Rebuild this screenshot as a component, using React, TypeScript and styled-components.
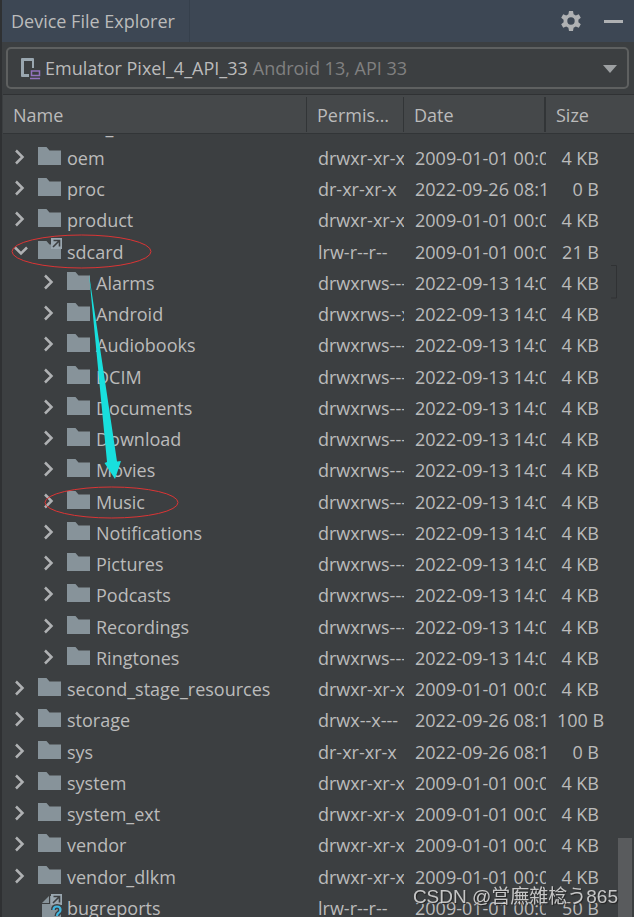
import React, { useLayoutEffect, useRef } from "react";
import styled, { createGlobalStyle } from "styled-components";

const GlobalStyle = createGlobalStyle`
  *, *::before, *::after { box-sizing: border-box; }
  body {
    margin: 0;
    background: #3c3f41;
    color: #bbbbbb;
    font: 18px/24px "Open Sans", "Noto Sans CJK SC", sans-serif;
  }
`;

const Panel = styled.main`
  position: relative;
  display: flex;
  flex-direction: column;
  height: 100vh;
  overflow: hidden;
  border-left: 2px solid #2f3133;
`;

const TitleBar = styled.header`
  display: flex;
  align-items: stretch;
  flex: none;
  height: 42px;
  padding-right: 11px;
  background: #3d4754;
`;

const Title = styled.h1`
  display: flex;
  align-items: center;
  width: 188px;
  margin: 0;
  padding-left: 9px;
  border-right: 1px solid #36404c;
  font-size: 18px;
  font-weight: 400;
  white-space: nowrap;
`;

const Tools = styled.div`
  display: flex;
  align-items: center;
  gap: 21px;
  margin-left: auto;
`;

const ToolButton = styled.button`
  display: flex;
  padding: 0;
  border: 0;
  background: none;
`;

const DeviceBar = styled.div`
  flex: none;
  padding: 5px 5px 5px 4px;
`;

const DeviceButton = styled.button`
  display: flex;
  align-items: center;
  width: 100%;
  height: 42px;
  padding: 0 10px 0 13px;
  border: 2px solid #5e6060;
  border-radius: 5px;
  background: #3c3f41;
  color: #bbbbbb;
  font: inherit;
  white-space: nowrap;
`;

const DeviceName = styled.span`
  margin: 0 5px 0 2px;
`;

const DeviceApi = styled.span`
  margin-right: auto;
  color: #808080;
`;

const Viewport = styled.div`
  flex: 1;
  min-height: 0;
  margin-left: 1px;
  overflow: hidden;
  border-top: 1px solid #303234;
`;

const Table = styled.table`
  width: 100%;
  border-collapse: separate;
  border-spacing: 0;
  table-layout: fixed;
`;

const Col = styled.col<{ $width?: number }>`
  width: ${({ $width }) => ($width ? `${$width}px` : "auto")};
`;

const HeadCell = styled.th<{ $divider?: number }>`
  position: sticky;
  top: 0;
  z-index: 1;
  height: 39px;
  padding: 2px 8px 0 10px;
  overflow: hidden;
  border-bottom: 1px solid #323537;
  background:
    linear-gradient(#323537, #323537) right 2px / ${({ $divider = 0 }) => $divider}px 35px no-repeat,
    #45484a;
  font-weight: 400;
  text-align: left;
  text-overflow: ellipsis;
  white-space: nowrap;
`;

const Row = styled.tr`
  height: 31px;
  &:nth-child(4n) { height: 32px; }
`;

const Cell = styled.td<{ $end?: boolean }>`
  padding: 0 ${({ $end }) => ($end ? 13 : 0)}px 0 11px;
  overflow: ${({ $end }) => ($end ? "visible" : "hidden")};
  line-height: 24px;
  text-align: ${({ $end }) => ($end ? "right" : "left")};
  white-space: nowrap;
`;

const Entry = styled.div<{ $depth: number }>`
  display: flex;
  align-items: center;
  padding-left: ${({ $depth }) => $depth * 29}px;
`;

const Toggle = styled.button`
  display: flex;
  width: 24px;
  height: 24px;
  padding: 1px 0 0;
  border: 0;
  background: none;
`;

const Icon = styled.svg`
  display: block;
  flex: none;
  margin: 0 5px 2px 0;
`;

const ScrollThumb = styled.div`
  position: absolute;
  right: 2px;
  bottom: 0;
  width: 14px;
  height: 79px;
  background: #595b5d;
`;

const Markup = styled.svg`
  position: absolute;
  top: 0;
  left: 0;
  z-index: 2;
  pointer-events: none;
`;

const Watermark = styled.div`
  position: absolute;
  right: 16px;
  bottom: 8px;
  z-index: 3;
  color: rgba(225, 225, 225, 0.85);
  font: 19px/24px "Liberation Sans", "Noto Sans CJK TC", "Noto Sans CJK JP", sans-serif;
  text-shadow: 1px 1px 1px #222;
  white-space: nowrap;
`;

type Kind = "folder" | "link" | "filelink";
type File = { name: string; perm: string; date: string; size: string; depth: number; kind: Kind };

const OLD = "2009-01-01 00:00";
const BOOT = "2022-09-26 08:11";
const MADE = "2022-09-13 14:00";

const file = (
  name: string, perm = "drwxr-xr-x", date = OLD, size = "4 KB", depth = 0, kind: Kind = "folder",
): File => ({ name, perm, date, size, depth, kind });
const child = (name: string, perm = "drwxrws---") => file(name, perm, MADE, "4 KB", 1);

const files: File[] = [
  file("odm_dlkm"),
  file("oem"),
  file("proc", "dr-xr-xr-x", BOOT, "0 B"),
  file("product"),
  file("sdcard", "lrw-r--r--", OLD, "21 B", 0, "link"),
  child("Alarms"),
  child("Android", "drwxrws--x"),
  child("Audiobooks"),
  child("DCIM"),
  child("Documents"),
  child("Download"),
  child("Movies"),
  child("Music"),
  child("Notifications"),
  child("Pictures"),
  child("Podcasts"),
  child("Recordings"),
  child("Ringtones"),
  file("second_stage_resources"),
  file("storage", "drwx--x---", BOOT, "100 B"),
  file("sys", "dr-xr-xr-x", BOOT, "0 B"),
  file("system"),
  file("system_ext"),
  file("vendor"),
  file("vendor_dlkm"),
  file("bugreports", "lrw-r--r--", OLD, "50 B", 0, "filelink"),
];

const LinkBadge = () => (
  <>
    <path d="M13 0H24V11H13Z" fill="#9aa7b0" />
    <path d="M15.500 2.500H21.500V8.500M21 3L15 9" fill="none" stroke="#3c3f41" strokeWidth="1.600" />
  </>
);

const FileIcon = ({ kind }: { kind: Kind }) =>
  kind === "filelink" ? (
    <Icon width="24" height="26" viewBox="0 0 24 26" aria-hidden="true">
      <path d="M11 2V9H4Z" fill="#87939a" />
      <path d="M12 2H23V26H4V10H12Z" fill="#87939a" />
      <LinkBadge />
      <path d="M15.500 16Q15.500 12.500 19 12.500T22.500 16Q22.500 18 20.500 19Q19 20 19 22M19 23.500V26" fill="none" stroke="#3c3f41" strokeWidth="5" />
      <path d="M15.500 16Q15.500 12.500 19 12.500T22.500 16Q22.500 18 20.500 19Q19 20 19 22M19 23.500V26" fill="none" stroke="#40b6e0" strokeWidth="2.200" />
    </Icon>
  ) : (
    <Icon width="24" height="26" viewBox="0 0 24 26" aria-hidden="true">
      <path d="M0 3H8.500L11.500 6.500H23V21H0Z" fill="#87939a" />
      {kind === "link" && <LinkBadge />}
    </Icon>
  );

const Chevron = ({ open }: { open: boolean }) => (
  <svg width="17" height="20" viewBox="0 0 17 20" aria-hidden="true">
    <path d={open ? "M1 6.500L7 12.500L13 6.500" : "M2 3.500L8.500 10L2 16.500"} fill="none" stroke="#afb1b3" strokeWidth="2.500" />
  </svg>
);

export default function App() {
  const viewport = useRef<HTMLDivElement>(null);

  useLayoutEffect(() => {
    if (viewport.current) viewport.current.scrollTop = 23;
  }, []);

  return (
    <Panel>
      <GlobalStyle />
      <TitleBar>
        <Title>Device File Explorer</Title>
        <Tools>
          <ToolButton aria-label="Settings">
            <svg width="24" height="24" viewBox="0 0 24 24" aria-hidden="true">
              <path
                fill="#afb1b3"
                fillRule="evenodd"
                d="M10 2H14L14.600 5.200L16.800 6.400L19.800 5.300L21.800 8.800L19.400 10.800V13.200L21.800 15.200L19.800 18.700L16.800 17.600L14.600 18.800L14 22H10L9.400 18.800L7.200 17.600L4.200 18.700L2.200 15.200L4.600 13.200V10.800L2.200 8.800L4.200 5.300L7.200 6.400L9.400 5.200ZM12 8.300A3.700 3.700 0 1 0 12 15.700A3.700 3.700 0 1 0 12 8.300Z"
              />
            </svg>
          </ToolButton>
          <ToolButton aria-label="Hide">
            <svg width="19" height="24" viewBox="0 0 19 24" aria-hidden="true">
              <path d="M0 11H19V14H0Z" fill="#afb1b3" />
            </svg>
          </ToolButton>
        </Tools>
      </TitleBar>
      <DeviceBar>
        <DeviceButton aria-haspopup="listbox">
          <svg width="22" height="24" viewBox="0 0 22 24" aria-hidden="true">
            <path d="M0 3Q0 2 1 2H12Q13 2 13 3V12H11V5H3V18H8V21H1Q0 21 0 20Z" fill="#9aa7b0" />
            <path d="M10.500 15H18.500V19.500H10.500ZM9 22.500H19" fill="none" stroke="#9373be" strokeWidth="1.500" />
          </svg>
          <DeviceName>Emulator Pixel_4_API_33</DeviceName>
          <DeviceApi>Android 13, API 33</DeviceApi>
          <svg width="14" height="10" viewBox="0 0 14 10" aria-hidden="true">
            <path d="M0 2H14L7 10Z" fill="#9da0a2" />
          </svg>
        </DeviceButton>
      </DeviceBar>
      <Viewport ref={viewport}>
        <Table>
          <colgroup>
            <Col />
            <Col $width={97} />
            <Col $width={142} />
            <Col $width={66} />
            <Col $width={22} />
          </colgroup>
          <thead>
            <tr>
              <HeadCell $divider={1}>Name</HeadCell>
              <HeadCell $divider={1}>Permissions</HeadCell>
              <HeadCell $divider={2}>Date</HeadCell>
              <HeadCell>Size</HeadCell>
              <HeadCell aria-hidden="true" />
            </tr>
          </thead>
          <tbody>
            {files.map((f) => (
              <Row key={f.name}>
                <Cell>
                  <Entry $depth={f.depth}>
                    <Toggle aria-label={`Toggle ${f.name}`}>
                      {f.kind !== "filelink" && <Chevron open={f.kind === "link"} />}
                    </Toggle>
                    <FileIcon kind={f.kind} />
                    {f.name}
                  </Entry>
                </Cell>
                <Cell>{f.perm}</Cell>
                <Cell>{f.date}</Cell>
                <Cell $end>{f.size}</Cell>
                <Cell />
              </Row>
            ))}
          </tbody>
        </Table>
      </Viewport>
      <ScrollThumb />
      <Markup width="632" height="917" viewBox="2 0 632 917" aria-hidden="true">
        <path d="M611 265.500H616.500V298H611" fill="none" stroke="#303234" />
        <ellipse cx="81.500" cy="251.500" rx="69.500" ry="16.500" fill="none" stroke="#dc3535" />
        <ellipse cx="111.500" cy="502.500" rx="66.500" ry="15.500" fill="none" stroke="#dc3535" />
        <path d="M89 274L107 462L104.500 463L115 479L121 461L117 461.500Z" fill="#18dfdd" />
      </Markup>
      <Watermark>CSDN @営廡雜棯う865</Watermark>
    </Panel>
  );
}
